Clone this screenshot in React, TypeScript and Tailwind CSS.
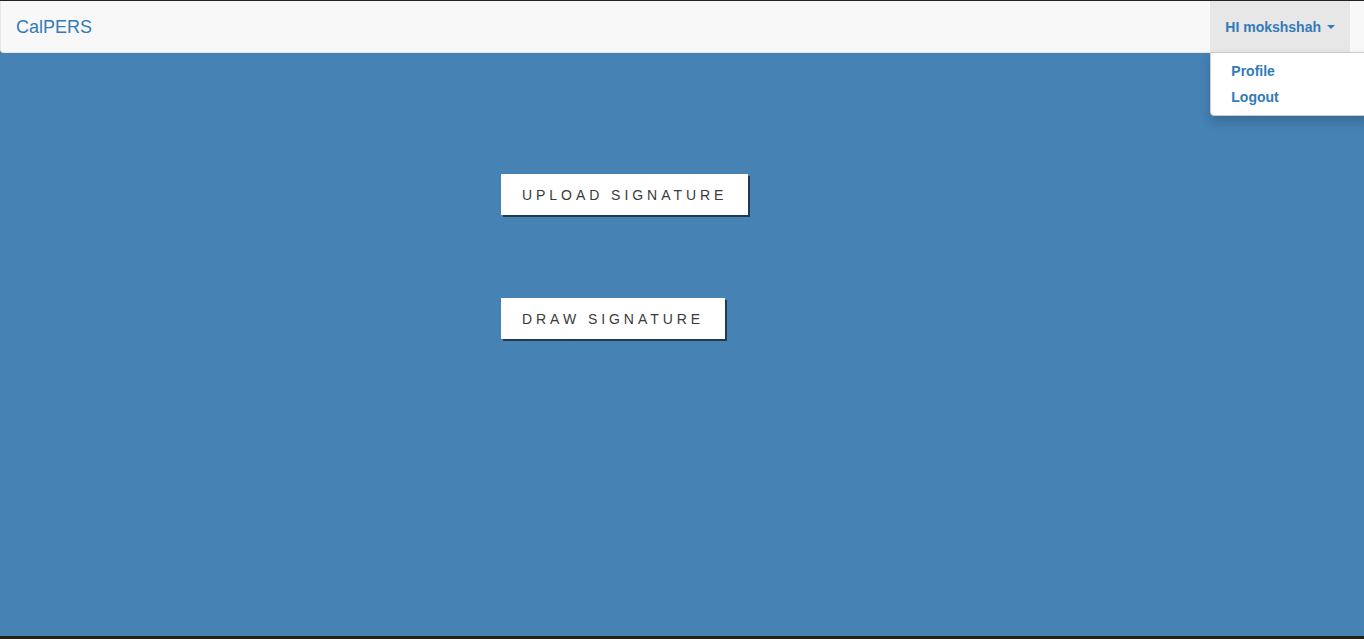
import React from "react";

export default function App() {
  return (
    <div
      className="w-[1364px] h-[639px] flex flex-col bg-[#4682b4] overflow-hidden"
      style={{ fontFamily: '"Liberation Sans", Arial, sans-serif' }}
    >
      <div className="h-px bg-[#222] shrink-0" />
      <nav className="relative h-[52px] shrink-0 flex items-stretch justify-between bg-[#f8f8f8] border-l border-b border-[#e7e7e7] rounded-bl-[4px] w-[1368px]">
        <div className="px-[15px] pt-[1px] flex items-center text-[18px] text-[#337ab7]">CalPERS</div>
        <div className="relative flex items-stretch mr-[18px]">
          <div className="flex items-center px-[15px] pt-[1px] bg-[#e7e7e7] text-[14px] font-bold text-[#337ab7]">
            HI mokshshah
            <span className="ml-[6px] inline-block w-0 h-0 border-l-[4px] border-r-[4px] border-t-[4px] border-l-transparent border-r-transparent border-t-[#337ab7]" />
          </div>
          <div className="absolute left-0 top-[51px] w-[160px] bg-white border border-[#ccc] rounded-b-[4px] shadow-[0_6px_12px_rgba(0,0,0,0.175)] py-[5px] z-10">
            <div className="px-[20px] leading-[20px] py-[3px] text-[14px] font-bold text-[#337ab7]">Profile</div>
            <div className="px-[20px] leading-[20px] py-[3px] text-[14px] font-bold text-[#337ab7]">Logout</div>
          </div>
        </div>
      </nav>
      <main className="flex-1 flex flex-col items-start pl-[501px] pt-[121px] gap-[83px]">
        <button className="h-[41px] w-[247px] bg-white text-left pl-[21px] pt-[2px] text-[14px] tracking-[3.95px] text-[#3a3a3a] shadow-[2px_2px_0_#1e3a55]">
          UPLOAD SIGNATURE
        </button>
        <button className="h-[41px] w-[224px] bg-white text-left pl-[21px] pt-[2px] text-[14px] tracking-[3.95px] text-[#3a3a3a] shadow-[2px_2px_0_#1e3a55]">
          DRAW SIGNATURE
        </button>
      </main>
      <div className="h-[3px] bg-[#23201c] shrink-0" />
    </div>
  );
}
